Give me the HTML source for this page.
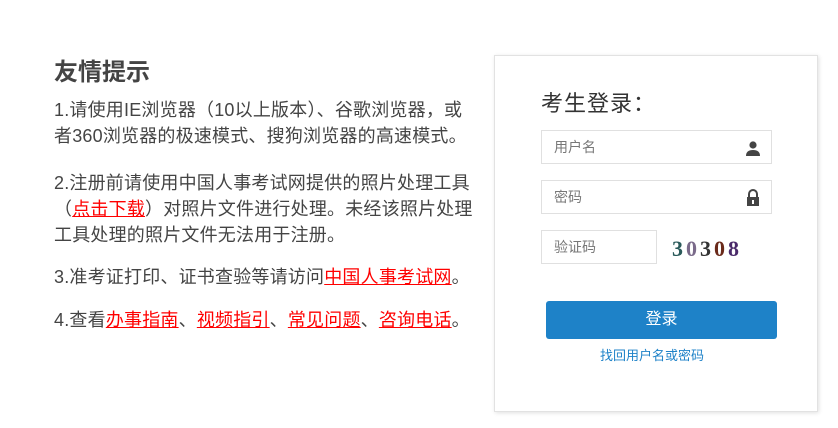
<!DOCTYPE html>
<html><head><meta charset="utf-8"><style>
body{margin:0;width:838px;height:428px;background:#fff;font-family:"Liberation Sans","Noto Sans CJK SC",sans-serif;position:relative;overflow:hidden;color:#444}
h1{position:absolute;left:54px;top:52px;margin:0;font-size:24px;font-weight:bold;color:#444}
p{position:absolute;left:54px;margin:0;font-size:18px;line-height:26px;color:#444;width:430px;white-space:nowrap;letter-spacing:0.2px}
a{color:#f00;text-decoration:underline}
.card{position:absolute;left:494px;top:55px;width:324px;height:357px;border:1px solid #e2e2e2;box-shadow:1px 1px 4px rgba(0,0,0,.12);box-sizing:border-box}
.t{position:absolute;left:541px;top:86px;font-size:22px;color:#333;letter-spacing:1px}
.in{position:absolute;left:541px;width:231px;height:34px;border:1px solid #e0e0e0;box-sizing:border-box;font-size:14px;color:#777;line-height:32px;padding-left:12px}
.btn{position:absolute;left:546px;top:301px;width:231px;height:38px;background:#1e82c8;border-radius:3px;color:#fff;font-size:16px;text-align:center;line-height:38px}
.fg{position:absolute;left:600px;top:345px;font-size:13px;color:#1e82c8}
</style></head><body>
<h1>友情提示</h1>
<p style="top:97px">1.请使用IE浏览器（10以上版本）、谷歌浏览器，或<br>者360浏览器的极速模式、搜狗浏览器的高速模式。</p>
<p style="top:170px">2.注册前请使用中国人事考试网提供的照片处理工具<br>（<a>点击下载</a>）对照片文件进行处理。未经该照片处理<br>工具处理的照片文件无法用于注册。</p>
<p style="top:264px">3.准考证打印、证书查验等请访问<a>中国人事考试网</a>。</p>
<p style="top:307px">4.查看<a>办事指南</a>、<a>视频指引</a>、<a>常见问题</a>、<a>咨询电话</a>。</p>
<div class="card"></div>
<div class="t">考生登录：</div>
<div class="in" style="top:130px">用户名
<svg style="position:absolute;right:10px;top:9px" width="16" height="16" viewBox="0 0 16 16"><circle cx="8" cy="5" r="3.6" fill="#444"/><path d="M1 16 Q1 10 8 10 Q15 10 15 16Z" fill="#444"/></svg></div>
<div class="in" style="top:180px">密码
<svg style="position:absolute;right:10px;top:8px" width="16" height="17" viewBox="0 0 16 17"><path d="M4 8V5a4 4 0 0 1 8 0v3" stroke="#444" stroke-width="2" fill="none"/><rect x="2" y="8" width="12" height="9" fill="#444"/><rect x="7" y="11" width="2" height="4" fill="#fff"/></svg></div>
<div class="in" style="top:230px;width:116px">验证码</div>
<div style="position:absolute;left:672px;top:234px;width:94px;height:30px;font:bold 22px 'Liberation Serif',serif;letter-spacing:3px;line-height:30px">
<span style="color:#2a5a5a">3</span><span style="color:#7a6a8a">0</span><span style="color:#333">3</span><span style="color:#6a2a1a">0</span><span style="color:#4a2a6a">8</span></div>
<div class="btn">登录</div>
<div class="fg">找回用户名或密码</div>
</body></html>
